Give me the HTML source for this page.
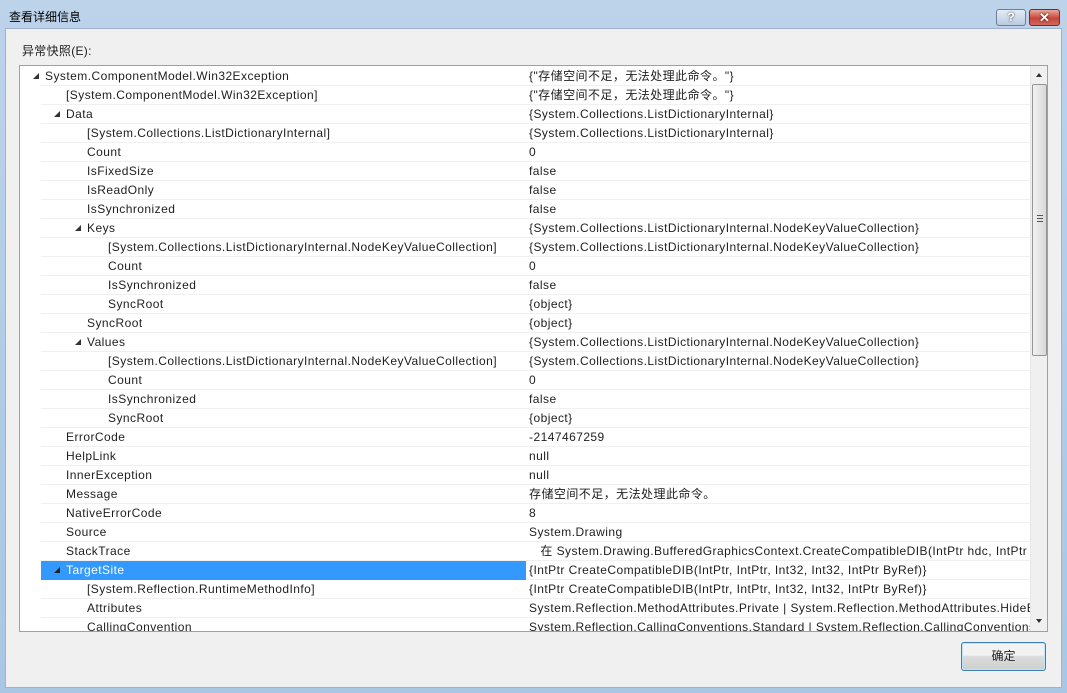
<!DOCTYPE html>
<html><head><meta charset="utf-8"><style>
*{margin:0;padding:0;box-sizing:border-box}
body{width:1067px;height:693px;overflow:hidden;background:linear-gradient(#bcd3ea,#a9c6e4);font-family:"Liberation Sans","Noto Sans CJK SC",sans-serif;font-size:12px;color:#1e1e1e;position:relative}
.title{position:absolute;left:9px;top:8px;font-size:12px;color:#000}
.client{position:absolute;left:5px;top:28px;width:1057px;height:660px;background:#f0f0f0;border:1px solid #9fb4cc}
.lbl{position:absolute;left:22px;top:42px;letter-spacing:0.3px}
.list{position:absolute;left:19px;top:65px;width:1029px;height:567px;border:1px solid #a0a0a0;background:#fff;overflow:hidden}
.row{position:absolute;left:21px;width:990px;height:19px;border-bottom:1px solid #f0f0f0}
.row span{position:absolute;top:2px;white-space:nowrap;line-height:15px;height:15px;letter-spacing:0.45px}
.v{left:488px}
.sel{position:absolute;left:0;top:0;width:485px;height:19px;background:#3399ff}
.tri{position:absolute;top:6px;width:0;height:0;border-left:6px solid transparent;border-bottom:6px solid #333}
.sb{position:absolute;left:1010px;top:0;width:17px;height:565px;background:#f0f0f0;border-left:1px solid #e8e8e8}
.thumb{position:absolute;left:1px;top:18px;width:15px;height:272px;border:1px solid #959595;border-radius:2px;background:linear-gradient(90deg,#f2f2f2,#d8d8d8)}
.btn{position:absolute;border-radius:3px}
</style></head><body>
<div class="title">查看详细信息</div>
<div class="btn" style="left:996px;top:9px;width:30px;height:17px;border:1px solid #6d7f96;background:linear-gradient(#e4ecf5,#b9cbe0);text-align:center;font-weight:bold;font-size:12px;line-height:15px;color:#fff;text-shadow:0 0 2px #333">?</div>
<div class="btn" style="left:1029px;top:9px;width:31px;height:17px;border:1px solid #7a2b22;background:linear-gradient(#e9a99b,#c7453a 55%,#d0685b);text-align:center;font-weight:bold;font-size:13px;line-height:15px;color:#fff;text-shadow:0 0 2px #400">✕</div>
<div class="client"></div>
<div class="lbl">异常快照(E):</div>
<div class="list">
<div id="rows"></div>
<div class="sb"><div style="position:absolute;left:5px;top:7px;border-left:3px solid transparent;border-right:3px solid transparent;border-bottom:4px solid #333"></div>
<div class="thumb"><div style="position:absolute;left:4px;top:130px;width:6px;height:7px;border-top:1px solid #555;border-bottom:1px solid #555;"><div style="margin-top:2px;border-top:1px solid #555"></div></div></div>
<div style="position:absolute;left:5px;top:553px;border-left:3px solid transparent;border-right:3px solid transparent;border-top:4px solid #333"></div></div>
</div>
<div class="btn" style="left:961px;top:642px;width:85px;height:29px;border:1px solid #3c7fb1;background:linear-gradient(#f2f2f2 45%,#dcdcdc 50%,#cfcfcf);box-shadow:inset 0 0 0 1px #bfe3f7;text-align:center;line-height:27px">确定</div>
<script>
var d=[
[0,1,"System.ComponentModel.Win32Exception",'{"存储空间不足，无法处理此命令。"}'],
[1,0,"[System.ComponentModel.Win32Exception]",'{"存储空间不足，无法处理此命令。"}'],
[1,1,"Data","{System.Collections.ListDictionaryInternal}"],
[2,0,"[System.Collections.ListDictionaryInternal]","{System.Collections.ListDictionaryInternal}"],
[2,0,"Count","0"],[2,0,"IsFixedSize","false"],[2,0,"IsReadOnly","false"],[2,0,"IsSynchronized","false"],
[2,1,"Keys","{System.Collections.ListDictionaryInternal.NodeKeyValueCollection}"],
[3,0,"[System.Collections.ListDictionaryInternal.NodeKeyValueCollection]","{System.Collections.ListDictionaryInternal.NodeKeyValueCollection}"],
[3,0,"Count","0"],[3,0,"IsSynchronized","false"],[3,0,"SyncRoot","{object}"],
[2,0,"SyncRoot","{object}"],
[2,1,"Values","{System.Collections.ListDictionaryInternal.NodeKeyValueCollection}"],
[3,0,"[System.Collections.ListDictionaryInternal.NodeKeyValueCollection]","{System.Collections.ListDictionaryInternal.NodeKeyValueCollection}"],
[3,0,"Count","0"],[3,0,"IsSynchronized","false"],[3,0,"SyncRoot","{object}"],
[1,0,"ErrorCode","-2147467259"],[1,0,"HelpLink","null"],[1,0,"InnerException","null"],
[1,0,"Message","存储空间不足，无法处理此命令。"],[1,0,"NativeErrorCode","8"],
[1,0,"Source","System.Drawing"],
[1,0,"StackTrace","&nbsp;&nbsp;&nbsp;在 System.Drawing.BufferedGraphicsContext.CreateCompatibleDIB(IntPtr hdc, IntPtr hBitmap"],
[1,2,"TargetSite","{IntPtr CreateCompatibleDIB(IntPtr, IntPtr, Int32, Int32, IntPtr ByRef)}"],
[2,0,"[System.Reflection.RuntimeMethodInfo]","{IntPtr CreateCompatibleDIB(IntPtr, IntPtr, Int32, Int32, IntPtr ByRef)}"],
[2,0,"Attributes","System.Reflection.MethodAttributes.Private | System.Reflection.MethodAttributes.HideBySig"],
[2,0,"CallingConvention","System.Reflection.CallingConventions.Standard | System.Reflection.CallingConventions.HasThis"]];
var h="";
d.forEach(function(r,i){
 var x=4+r[0]*21, sel=r[1]==2;
 h+='<div class="row" style="top:'+(1+i*19)+'px">'+(sel?'<div class="sel"></div>':'')+
 (r[1]?'<div class="tri" style="left:'+(r[0]*21-8)+'px;'+(sel?'border-bottom-color:#222':'')+'"></div>':'')+
 '<span style="left:'+x+'px;'+(sel?'color:#fff':'')+'">'+r[2]+'</span><span class="v" style="max-width:502px;overflow:hidden">'+r[3]+'</span></div>';
});
document.getElementById("rows").innerHTML=h;
</script>
</body></html>
